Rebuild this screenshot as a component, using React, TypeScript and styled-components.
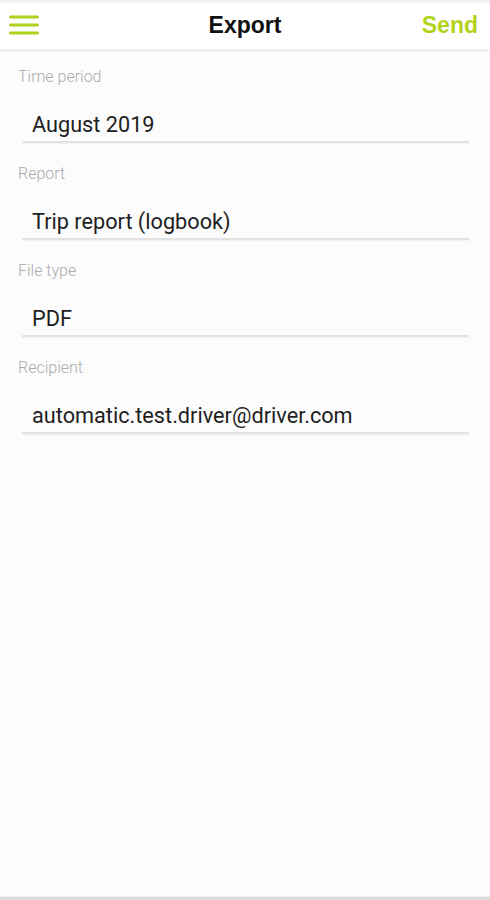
import React from 'react'
import styled, { createGlobalStyle } from 'styled-components'

const GlobalStyle = createGlobalStyle`
  html, body {
    margin: 0;
    padding: 0;
    background: #fcfcfc;
  }
  body {
    font-family: Roboto, "Liberation Sans", Arial, sans-serif;
  }
`

type Field = {
  label: string
  value: string
}

const fields: Field[] = [
  { label: 'Time period', value: 'August 2019' },
  { label: 'Report', value: 'Trip report (logbook)' },
  { label: 'File type', value: 'PDF' },
  { label: 'Recipient', value: 'automatic.test.driver@driver.com' },
]

const MenuIcon = (): JSX.Element => (
  <svg width="32" height="24" viewBox="0 0 32 24">
    <g stroke="#add41a" strokeWidth="3" strokeLinecap="round">
      <line x1="2.5" y1="4" x2="29.5" y2="4" />
      <line x1="2.5" y1="12" x2="29.5" y2="12" />
      <line x1="2.5" y1="20" x2="29.5" y2="20" />
    </g>
  </svg>
)

export default function App(): JSX.Element {
  return (
    <Screen>
      <GlobalStyle />
      <Header>
        <MenuButton>
          <MenuIcon />
        </MenuButton>
        <Title>Export</Title>
        <SendButton>Send</SendButton>
      </Header>
      <Form>
        {fields.map(f => (
          <FieldBlock key={f.label}>
            <Label>{f.label}</Label>
            <Value>{f.value}</Value>
          </FieldBlock>
        ))}
      </Form>
      <Bottom />
    </Screen>
  )
}

const Screen = styled.div`
  width: 490px;
  height: 900px;
  display: flex;
  flex-direction: column;
  background: #fcfcfc;
`

const Header = styled.div`
  height: 44px;
  padding-top: 5px;
  display: grid;
  grid-template-columns: 80px 1fr 80px;
  align-items: center;
  background: linear-gradient(#eeeeee 0, #ffffff 5px);
  box-shadow: 0 1px 2px rgba(0, 0, 0, 0.08);
  border-bottom: 1px solid #eeeeee;
  position: relative;
  z-index: 1;
`

const MenuButton = styled.div`
  display: flex;
  align-items: center;
  padding-left: 8px;
  height: 24px;
  margin-top: -5px;
`

const Title = styled.div`
  text-align: center;
  font-family: "Liberation Sans", Arial, sans-serif;
  font-weight: bold;
  font-size: 23px;
  color: #111;
  margin-top: -4px;
`

const SendButton = styled.div`
  text-align: right;
  padding-right: 12px;
  font-family: "Liberation Sans", Arial, sans-serif;
  font-weight: bold;
  font-size: 23px;
  color: #b2d21c;
  margin-top: -4px;
`

const Form = styled.div`
  flex: 1;
  display: flex;
  flex-direction: column;
  padding-top: 18px;
`

const FieldBlock = styled.div`
  display: flex;
  flex-direction: column;
  margin-bottom: 22px;
`

const Label = styled.div`
  padding-left: 18px;
  height: 18px;
  line-height: 18px;
  font-size: 16px;
  font-weight: 300;
  color: #ababab;
`

const Value = styled.div`
  margin: 0 21px 0 22px;
  padding: 27px 0 4px 10px;
  line-height: 24px;
  font-size: 21.7px;
  color: #1e1e1e;
  border-bottom: 2px solid #e2e2e2;
  box-shadow: 0 1px 1px rgba(0, 0, 0, 0.04);
`

const Bottom = styled.div`
  height: 3px;
  background: #dcdcdc;
  border-top: 1px solid #f0f0f0;
`
